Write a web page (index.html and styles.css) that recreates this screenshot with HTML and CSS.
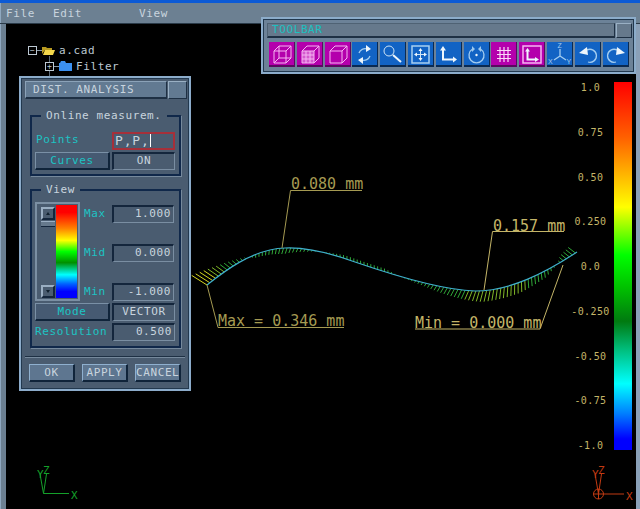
FILE: index.html
```html
<!DOCTYPE html>
<html lang="en">
  <head>
    <meta charset="UTF-8" />
    <meta name="viewport" content="width=device-width, initial-scale=1.0" />
    <title>Dist. Analysis</title>
    <link rel="stylesheet" href="styles.css">
  </head>
  <body>
    <div class="app">
      <nav class="menubar">
        <a class="menu-item">File</a>
        <a class="menu-item menu-edit">Edit</a>
        <a class="menu-item menu-view">View</a>
      </nav>

      <main class="viewport">
        <!-- tree -->
        <ul class="tree">
          <li class="tree-row">
            <span class="tree-box">−</span>
            <span class="tree-dash"></span>
            <svg class="tree-folder" viewBox="0 0 13 10">
              <path d="M0 9V2h4l1 1h5v2H3L0 9Z" fill="#b89a20" />
              <path d="M1 10l2-5h10l-2 5Z" fill="#f4d84c" />
            </svg>
            <span>a.cad</span>
          </li>
          <li class="tree-row tree-child">
            <span class="tree-box">+</span>
            <span class="tree-dash"></span>
            <svg class="tree-folder" viewBox="0 0 13 10">
              <path d="M0 10V2h1l1-2h4l1 2h6v8Z" fill="#3c90f0" />
            </svg>
            <span>Filter</span>
          </li>
        </ul>

        <!-- model, leaders and triads, in page coordinates -->
        <svg class="model" viewBox="6 24 630 485">
          <g id="hairs"></g>
          <path id="curve" class="curve" d="M207 285C222 273 252 249 285 248C305 247 330 253 355 262C390 274 440 290 475 291C510 291 545 273 577 252" />

          <path class="leader" d="M362 190.500H290.500L282 248" />
          <path class="leader" d="M344 327.500H218L207 285" />
          <path class="leader leader-bright" d="M564 231.500H492.500L484 290" />
          <path class="leader leader-bright" d="M415 329H540L563 265" />
          <text class="note" x="291" y="189">0.080 mm</text>
          <text class="note" x="218" y="326">Max = 0.346 mm</text>
          <text class="note note-bright" x="493" y="231">0.157 mm</text>
          <text class="note note-bright" x="415" y="328">Min = 0.000 mm</text>

          <g class="triad triad-green">
            <path d="M43.500 493.500H69M43.500 493.500L40 474M43.500 493.500L46.500 474" />
            <text x="71" y="499">X</text>
            <text x="37" y="478">Y</text>
            <text x="43" y="474">Z</text>
          </g>
          <g class="triad triad-red">
            <path d="M593 494H624M598.500 499V489M598.500 494L595 474M598.500 494L601.500 474" />
            <circle cx="598.500" cy="494" r="5" />
            <text x="626" y="500">X</text>
            <text x="592" y="478">Y</text>
            <text x="598" y="474">Z</text>
          </g>
        </svg>

        <!-- colour scale -->
        <div class="scale">
          <div class="scale-labels">
            <span>1.0</span>
            <span>0.75</span>
            <span>0.50</span>
            <span>0.250</span>
            <span>0.0</span>
            <span>-0.250</span>
            <span>-0.50</span>
            <span>-0.75</span>
            <span>-1.0</span>
          </div>
          <div class="scale-bar"></div>
        </div>
      </main>

      <!-- toolbar window -->
      <section class="window toolbar">
        <div class="title-row">
          <div class="title title-toolbar">TOOLBAR</div>
          <div class="title-btn"></div>
        </div>
        <div class="tools">
          <button class="tool tool-on">
            <svg viewBox="0 0 26 25"><path d="M5 9h12v12H5ZM10 4h12v12H10ZM5 9l5-5M17 9l5-5M17 21l5-5M5 21l5-5" /></svg>
          </button>
          <button class="tool tool-on">
            <svg viewBox="0 0 26 25"><path class="shade" d="M5 9h12v12H5Z" /><path d="M5 9h12v12H5ZM5 9l5-5h12v12l-5 5M17 9l5-5M9 9v12M13 9v12M5 13h12M5 17h12" /></svg>
          </button>
          <button class="tool tool-on">
            <svg viewBox="0 0 26 25"><path d="M5 9h12v12H5ZM5 9l5-5h12v12l-5 5M17 9l5-5" /></svg>
          </button>
          <button class="tool">
            <svg viewBox="0 0 26 25"><path class="soft" d="M7 11a6.500 6.500 0 0 1 8-4M18 14a6.500 6.500 0 0 1-8 4" /><path class="solid" d="M14 3l5 4-5 3ZM11 22l-5-4 5-3Z" /></svg>
          </button>
          <button class="tool">
            <svg viewBox="0 0 26 25"><circle cx="9" cy="9" r="5" /><path class="thick" d="M13 13l8 7" /></svg>
          </button>
          <button class="tool">
            <svg viewBox="0 0 26 25"><path class="frame" d="M4 4h17v17H4Z" /><path d="M12.500 8v9M8 12.500h9" /><path class="solid" d="M12.500 6l2 3h-4ZM12.500 19l2-3h-4ZM6 12.500l3-2v4ZM19 12.500l-3-2v4Z" /></svg>
          </button>
          <button class="tool">
            <svg viewBox="0 0 26 25"><path class="thick" d="M7 8v9.500h10" /><path class="solid" d="M7 4l3 4.500H4ZM21 17.500l-4-3v6Z" /></svg>
          </button>
          <button class="tool">
            <svg viewBox="0 0 26 25"><path class="soft" d="M8.500 7a7.500 7.500 0 1 0 8 0" /><circle class="solid" cx="12.500" cy="13" r="1.200" /><path class="solid soft-fill" d="M8 4l3 3-3 3ZM17 4l-3 3 3 3Z" /></svg>
          </button>
          <button class="tool tool-on">
            <svg viewBox="0 0 26 25"><path class="thick-grid" d="M9 5v15M13 5v15M17 5v15M6 8.500h14M6 12.500h14M6 16.500h14" /></svg>
          </button>
          <button class="tool tool-on">
            <svg viewBox="0 0 26 25"><path class="frame" d="M4 4h18v17H4Z" /><path class="thick" d="M8.500 9v8.500h8" /><path class="solid" d="M8.500 6l2.500 3.500h-5ZM20 17.500l-4-2.500v5Z" /></svg>
          </button>
          <button class="tool">
            <svg viewBox="0 0 26 25">
              <path class="soft" d="M13 7v7M13 14l-6 4M13 14l6 4" />
              <text class="tool-text" x="10.500" y="6">Z</text>
              <text class="tool-text" x="1" y="22">X</text>
              <text class="tool-text" x="19.500" y="22">Y</text>
            </svg>
          </button>
          <button class="tool">
            <svg viewBox="0 0 26 25"><path class="soft" d="M12 8a6.500 6.500 0 1 1 1 12" /><path class="solid" d="M4 11l8-6 1 8Z" /></svg>
          </button>
          <button class="tool">
            <svg viewBox="0 0 26 25"><path class="soft" d="M14 8a6.500 6.500 0 1 0-1 12" /><path class="solid" d="M22 11l-8-6-1 8Z" /></svg>
          </button>
        </div>
      </section>

      <!-- analysis dialog -->
      <section class="window dialog">
        <div class="title-row">
          <div class="title">DIST. ANALYSIS</div>
          <div class="title-btn"></div>
        </div>

        <fieldset class="group group-online">
          <legend>Online measurem.</legend>
          <div class="form-row">
            <label class="field-label field-label-top">Points</label>
            <div class="field field-active">P,P,<span class="caret"></span></div>
          </div>
          <div class="form-row">
            <button class="btn btn-dark">Curves</button>
            <div class="field field-center">ON</div>
          </div>
        </fieldset>

        <fieldset class="group group-view">
          <legend>View</legend>
          <div class="range">
            <div class="range-panel">
              <div class="scrollbar">
                <span class="scroll-btn scroll-up"></span>
                <span class="scroll-thumb"></span>
                <span class="scroll-btn scroll-down"></span>
              </div>
              <div class="range-bar"></div>
            </div>
            <div class="range-values">
              <div class="range-row"><label class="field-label">Max</label><div class="field">1.000</div></div>
              <div class="range-row"><label class="field-label">Mid</label><div class="field">0.000</div></div>
              <div class="range-row"><label class="field-label">Min</label><div class="field">-1.000</div></div>
            </div>
          </div>
          <div class="form-row">
            <button class="btn btn-dark">Mode</button>
            <div class="field field-center">VECTOR</div>
          </div>
          <div class="form-row">
            <label class="field-label">Resolution</label>
            <div class="field">0.500</div>
          </div>
        </fieldset>

        <div class="actions">
          <button class="btn btn-action">OK</button>
          <button class="btn btn-action">APPLY</button>
          <button class="btn btn-action">CANCEL</button>
        </div>
      </section>
    </div>

    <script src="curve.js"></script>
  </body>
</html>
```

FILE: styles.css
```css
/* Base */
body {
  margin: 0;
  background-color: #000;
  font-family: "DejaVu Sans Mono", "Liberation Mono", monospace;
  font-size: 11px;
  letter-spacing: 0.6px;
  color: #c8d4de;
}

.app {
  position: relative;
  width: 640px;
  height: 509px;
  overflow: hidden;
  background-color: #6c8092;
  box-shadow: inset 1px 0 0 #8fa8c0;
}

/* Menu */
.menubar {
  display: flex;
  align-items: center;
  height: 20px;
  padding-left: 6px;
  border-top: 3px solid #0b5ad6;
  border-bottom: 1px solid #2a3a48;
}

.menu-item {
  width: 28px;
}

.menu-edit {
  margin-left: 19px;
}

.menu-view {
  margin-left: 58px;
}

/* Viewport */
.viewport {
  position: absolute;
  left: 6px;
  top: 24px;
  width: 630px;
  height: 485px;
  background-color: #000;
  box-shadow: 4px 0 0 #8aa0b8;
}

.tree {
  position: absolute;
  left: 22px;
  top: 18px;
  margin: 0;
  padding: 0;
  list-style: none;
  color: #bcc8d2;
}

.tree-row {
  display: flex;
  align-items: center;
  height: 16px;
}

.tree-child {
  margin-left: 17px;
}

.tree-box {
  position: relative;
  display: flex;
  align-items: center;
  justify-content: center;
  width: 7px;
  height: 7px;
  border: 1px solid #bcc8d2;
  font-size: 8px;
  letter-spacing: 0;
  line-height: 7px;
}

.tree-child .tree-box::before,
.tree-child .tree-box::after {
  content: "";
  position: absolute;
  left: 3px;
  width: 1px;
  height: 6px;
  background-color: #5c6a76;
}

.tree-child .tree-box::before {
  top: -7px;
}

.tree-child .tree-box::after {
  bottom: -7px;
}

.tree-dash {
  width: 5px;
  height: 1px;
  background-color: #8a9aa8;
}

.tree-folder {
  width: 13px;
  height: 10px;
  margin-right: 4px;
}

.model {
  position: absolute;
  inset: 0;
  width: 630px;
  height: 485px;
}

.curve {
  fill: none;
  stroke: #3fb0cc;
  stroke-width: 1.2;
}

.hair {
  stroke-width: 1;
}

.leader {
  fill: none;
  stroke: #a59a52;
  stroke-width: 1;
}

.leader-bright {
  stroke: #c4b568;
}

.note {
  fill: #a59a52;
  font-size: 15px;
  letter-spacing: 0;
}

.note-bright {
  fill: #c4b568;
}

.triad path,
.triad circle {
  fill: none;
  stroke-width: 1;
}

.triad text {
  font-size: 11px;
  letter-spacing: 0;
}

.triad-green path {
  stroke: #14a02a;
}

.triad-green text {
  fill: #14a02a;
}

.triad-red path,
.triad-red circle {
  stroke: #c23a12;
}

.triad-red text {
  fill: #c23a12;
}

/* Colour scale */
.scale {
  position: absolute;
  right: 4px;
  top: 58px;
  display: flex;
  gap: 1px;
}

.scale-labels {
  display: flex;
  flex-direction: column;
  justify-content: space-between;
  align-items: center;
  width: 45px;
  height: 370px;
  color: #c4b568;
  font-size: 10px;
  letter-spacing: 0.4px;
  line-height: 12px;
}

.scale-bar {
  width: 18px;
  height: 368px;
  background: linear-gradient(#ff0000, #ff6000 15%, #ffff00 34%, #00ff00 47%, #00c000 56%, #007a10 65%, #00c080 73%, #00ffff 82%, #0080ff 90%, #0000ff 97%);
}

/* Windows */
.window {
  position: absolute;
  box-sizing: border-box;
  border: 2px solid #8cacca;
  outline: 1px solid #22384e;
  outline-offset: -3px;
  padding: 3px 4px;
}

.title-row {
  display: flex;
  gap: 1px;
  margin-right: -2px;
}

.title {
  flex: 1;
  box-sizing: border-box;
  height: 18px;
  padding-left: 7px;
  border: 1px solid #8ba2b8;
  border-right-color: #1e3044;
  border-bottom: 2px solid #1e3044;
  background-color: #627a92;
  line-height: 15px;
}

.title-btn {
  box-sizing: border-box;
  width: 19px;
  height: 18px;
  border: 1px solid #9ab0c4;
  border-right-color: #1e3044;
  border-bottom-color: #1e3044;
  background-color: #627a92;
}

/* Toolbar */
.toolbar {
  left: 261px;
  top: 17px;
  width: 375px;
  height: 57px;
  padding-top: 4px;
  background-color: #6c8298;
}

.title-toolbar {
  height: 15px;
  padding-left: 4px;
  border-color: #4f6274 #1e3044 #1e3044 #4f6274;
  background-color: #66798c;
  color: #1cc0c0;
  line-height: 12px;
}

.toolbar .title-btn {
  width: 16px;
  height: 15px;
  background-color: #66798c;
}

.tools {
  display: flex;
  gap: 1.800px;
  margin-top: 4px;
  padding-left: 2px;
}

.tool {
  box-sizing: border-box;
  width: 26px;
  height: 25px;
  padding: 0;
  border: none;
  border-right: 1px solid #0a2a52;
  border-bottom: 2px solid #0a2a52;
  background-color: #1263c4;
}

.tool svg {
  display: block;
  width: 26px;
  height: 25px;
  fill: none;
  stroke: #cfe4f6;
  stroke-width: 1;
}

.tool-on {
  border-right-color: #5a0a60;
  border-bottom-color: #5a0a60;
  background-color: #b400ac;
}

.tool-on svg {
  stroke: #f6b4f2;
}

.tool .solid {
  fill: #eef6fc;
  stroke: none;
}

.tool .soft-fill {
  fill: #9cc8ee;
}

.tool .soft {
  stroke: #a4cdf0;
  stroke-width: 1.300;
}

.tool .thick {
  stroke-width: 2;
  stroke: #eef6fc;
}

.tool .thick-grid {
  stroke-width: 1.200;
  stroke: #fbd8f8;
}

.tool .frame {
  stroke-width: 1.500;
  stroke: #a8cff0;
}

.tool-on .frame {
  stroke: #f6b4f2;
}

.tool .shade {
  fill: #f6b4f2;
  fill-opacity: 0.5;
  stroke: none;
}

.tool-text {
  fill: #a4cdf0;
  stroke: none;
  font-size: 7px;
  letter-spacing: 0;
}

/* Dialog */
.dialog {
  left: 19px;
  top: 76px;
  width: 172px;
  height: 315px;
  background-color: #4a5c70;
}

.group {
  margin: 0 4px 0 5px;
  padding: 0 3px;
  border: 2px solid #10284a;
  box-shadow: 1px 1px 0 #76899c;
}

.group legend {
  margin-left: 6px;
  padding: 0 5px;
  line-height: 14px;
}

.group-online {
  margin-top: 10px;
  padding-top: 7px;
  padding-bottom: 4px;
}

.group-view {
  margin-top: 7px;
  padding-top: 5px;
  padding-bottom: 5px;
}

.form-row {
  display: grid;
  grid-template-columns: 75px 63px;
  gap: 2px;
  align-items: center;
  margin-top: 2px;
}

.field-label {
  padding-bottom: 2px;
  color: #1cc4c4;
}

.field-label-top {
  padding-bottom: 4px;
  padding-left: 1px;
}

.field {
  box-sizing: border-box;
  height: 18px;
  padding-right: 2px;
  border: 1px solid #7a8ea2;
  border-top: 2px solid #14263c;
  border-left: 2px solid #14263c;
  background-color: #4a5c70;
  text-align: right;
  line-height: 13px;
}

.field-center {
  padding-right: 0;
  text-align: center;
}

.field-active {
  display: flex;
  padding-left: 1px;
  border: 2px solid #a5303a;
  font-size: 13px;
  letter-spacing: 0.8px;
  line-height: 14px;
}

.caret {
  width: 1.500px;
  height: 13px;
  background-color: #fff;
}

.btn {
  box-sizing: border-box;
  height: 18px;
  padding: 0;
  font: inherit;
  letter-spacing: inherit;
  border: 1px solid #7a90a6;
  border-right: 2px solid #10243a;
  border-bottom: 2px solid #10243a;
}

.btn-dark {
  background-color: #465a72;
  color: #1cc4c4;
}

.range {
  display: flex;
  gap: 4px;
}

.range-panel {
  box-sizing: border-box;
  display: flex;
  gap: 1px;
  width: 45px;
  height: 99px;
  padding: 1px 1px 1px 4px;
  border: 2px solid #7b8fa3;
}

.scrollbar {
  display: flex;
  flex-direction: column;
  width: 14px;
  padding-top: 2px;
}

.scroll-btn {
  box-sizing: border-box;
  display: flex;
  align-items: center;
  justify-content: center;
  width: 14px;
  height: 13px;
  border: 2px solid #9aaec2;
  border-right-color: #14263c;
  border-bottom-color: #14263c;
  background-color: #4a5c70;
}

.scroll-btn::before {
  content: "";
  border-left: 2.500px solid transparent;
  border-right: 2.500px solid transparent;
}

.scroll-up::before {
  border-bottom: 3px solid #10202e;
}

.scroll-down {
  margin-top: auto;
}

.scroll-down::before {
  border-top: 3px solid #10202e;
}

.scroll-thumb {
  box-sizing: border-box;
  height: 6px;
  margin-top: 1px;
  border-top: 1px solid #9aaec2;
  border-bottom: 1px solid #14263c;
  background-color: #66798c;
}

.range-bar {
  width: 21px;
  background: linear-gradient(#ff0000 8%, #ff8000 25%, #ffff00 38%, #00ff00 50%, #009000 62%, #00ffff 75%, #0060ff 85%, #0000ff 93%);
}

.range-values {
  display: flex;
  flex-direction: column;
  justify-content: space-between;
  padding-top: 3px;
}

.range-row {
  display: grid;
  grid-template-columns: 28px 62px;
  align-items: center;
}

.actions {
  display: flex;
  justify-content: space-between;
  margin-top: 8px;
  padding: 7px 4px 0 4px;
  border-top: 1px solid #1e3044;
  box-shadow: inset 0 1px 0 #76899c;
}

.btn-action {
  width: 46px;
  background-color: #5e7690;
  border-color: #8fb0cf;
  border-right-color: #10243a;
  border-bottom-color: #10243a;
  color: #c8d4de;
}
```

FILE: curve.js
```js
// Draws the deviation vectors along the curve
const curve = document.getElementById("curve");
const hairs = document.getElementById("hairs");

// [x along curve, signed deviation in px] (positive is above the curve)
const deviation = [
  [207, 17], [225, 9], [245, 2], [255, -3], [285, -6], [305, -3], [320, 0],
  [345, 3], [385, 3], [400, 0], [425, -3], [450, -7], [485, -11], [520, -10],
  [545, -6], [557, 0], [565, 6], [577, 9],
];

function deviationAt(x) {
  for (let i = 1; i < deviation.length; i++) {
    const [x0, d0] = deviation[i - 1];
    const [x1, d1] = deviation[i];
    if (x <= x1) {
      return d0 + ((d1 - d0) * (x - x0)) / (x1 - x0);
    }
  }
  return 0;
}

function hairColor(size) {
  if (size > 13) return "#d8d820";
  if (size > 9) return "#80b828";
  return "#30a838";
}

const total = curve.getTotalLength();

for (let s = 0; s < total; s += 3.6) {
  const p = curve.getPointAtLength(s);
  const q = curve.getPointAtLength(s + 0.5);
  const len = Math.hypot(q.x - p.x, q.y - p.y) || 1;
  const tx = (q.x - p.x) / len;
  const ty = (q.y - p.y) / len;
  const d = deviationAt(p.x);
  const lean = Math.abs(d) * 0.35;
  const line = document.createElementNS("http://www.w3.org/2000/svg", "line");
  line.setAttribute("class", "hair");
  line.setAttribute("x1", p.x);
  line.setAttribute("y1", p.y);
  // normal, leaning a little backwards like the vectors in the model
  line.setAttribute("x2", p.x + ty * d - tx * lean);
  line.setAttribute("y2", p.y - tx * d - ty * lean);
  line.setAttribute("stroke", hairColor(Math.abs(d)));
  hairs.appendChild(line);
}
```
